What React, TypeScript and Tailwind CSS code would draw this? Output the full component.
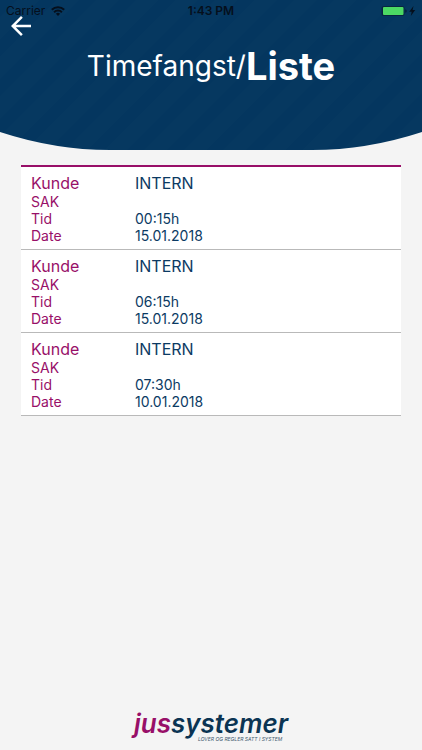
import { MdArrowBack } from "react-icons/md";

type Entry = { kunde: string; sak: string; tid: string; date: string };

const entries: Entry[] = [
  { kunde: "INTERN", sak: "", tid: "00:15h", date: "15.01.2018" },
  { kunde: "INTERN", sak: "", tid: "06:15h", date: "15.01.2018" },
  { kunde: "INTERN", sak: "", tid: "07:30h", date: "10.01.2018" },
];

function StatusBar() {
  return (
    <div className="grid grid-cols-3 items-center px-1.5 pt-[3px] text-xs leading-4 text-[#050f1c]">
      <div className="flex items-center gap-1.5">
        <span>Carrier</span>
        <svg viewBox="0 0 14 10" className="h-2.5 w-3.5" fill="none" stroke="currentColor" strokeWidth="2">
          <path d="M.8 3.8a8.8 8.8 0 0 1 12.4 0" />
          <path d="M3.1 6.2a5.5 5.5 0 0 1 7.8 0" />
          <path d="M7 10 4.9 7.8a3 3 0 0 1 4.2 0Z" fill="currentColor" stroke="none" />
        </svg>
      </div>
      <span className="text-center font-semibold">1:43 PM</span>
      <svg viewBox="0 0 36 12" className="h-3 w-9 justify-self-end" fill="currentColor">
        <rect x="1.5" y="1" width="23" height="10" rx="2.5" fill="#082540" />
        <rect x="3" y="2" width="20.5" height="8" rx="1" fill="#4cd964" />
        <path d="M25.5 4.2c1.3.5 1.3 3.1 0 3.6Z" />
        <path d="M33.5 1 29.2 6.7h2.5L30.8 11l4.4-5.9h-2.6Z" />
      </svg>
    </div>
  );
}

function Header() {
  return (
    <header className="relative h-[150px]">
      <svg viewBox="0 0 422 150" preserveAspectRatio="none" className="absolute inset-0 h-full w-full" aria-hidden="true">
        <defs>
          <pattern id="stripes" width="28" height="28" patternUnits="userSpaceOnUse" patternTransform="rotate(45)">
            <rect width="28" height="28" fill="#063860" />
            <rect width="12" height="28" fill="#04365f" />
          </pattern>
        </defs>
        <path d="M0 0H422V132Q367 150 312 150H110Q55 150 0 132Z" fill="url(#stripes)" />
      </svg>
      <div className="relative">
        <StatusBar />
        <button type="button" aria-label="Tilbake" className="absolute left-1.5 top-[11px] text-white">
          <MdArrowBack className="size-[30px]" />
        </button>
        <h1 className="flex items-center justify-center pt-[21px] text-[28px] leading-[52px] text-white">
          Timefangst/<strong className="text-[38px] font-bold">Liste</strong>
        </h1>
      </div>
    </header>
  );
}

function EntryRow({ entry }: { entry: Entry }) {
  return (
    <li className="border-b border-[#b9b9b9] bg-white px-2.5 pb-[5px] pt-1.5">
      <dl className="grid grid-cols-[104px_1fr] text-sm leading-[17px] text-[#0b3a63]">
        <dt className="text-base leading-5 text-[#980f68]">Kunde</dt>
        <dd className="text-base leading-5">{entry.kunde}</dd>
        <dt className="text-[#980f68]">SAK</dt>
        <dd>{entry.sak}</dd>
        <dt className="text-[#980f68]">Tid</dt>
        <dd>{entry.tid}</dd>
        <dt className="text-[#980f68]">Date</dt>
        <dd>{entry.date}</dd>
      </dl>
    </li>
  );
}

function Logo() {
  return (
    <svg viewBox="0 0 160 42" className="h-[42px] w-40" fontStyle="italic" role="img" aria-label="jussystemer">
      <text x="3" y="29" fontSize="26" fontWeight="600" fill="#0b3453">
        <tspan fill="#980f68">jus</tspan>systemer
      </text>
      <text x="67" y="37" fontSize="5" fill="#3f5a70">
        LOVER OG REGLER SATT I SYSTEM
      </text>
    </svg>
  );
}

export default function App() {
  return (
    <div className="flex min-h-screen flex-col bg-[#f4f4f4] font-['Inter',sans-serif]">
      <Header />
      <main className="flex-1 px-[21px] pt-[15px]">
        <ul className="border-t-2 border-[#980f68]">
          {entries.map((entry, i) => (
            <EntryRow key={i} entry={entry} />
          ))}
        </ul>
      </main>
      <footer className="flex justify-center pb-1">
        <Logo />
      </footer>
    </div>
  );
}
